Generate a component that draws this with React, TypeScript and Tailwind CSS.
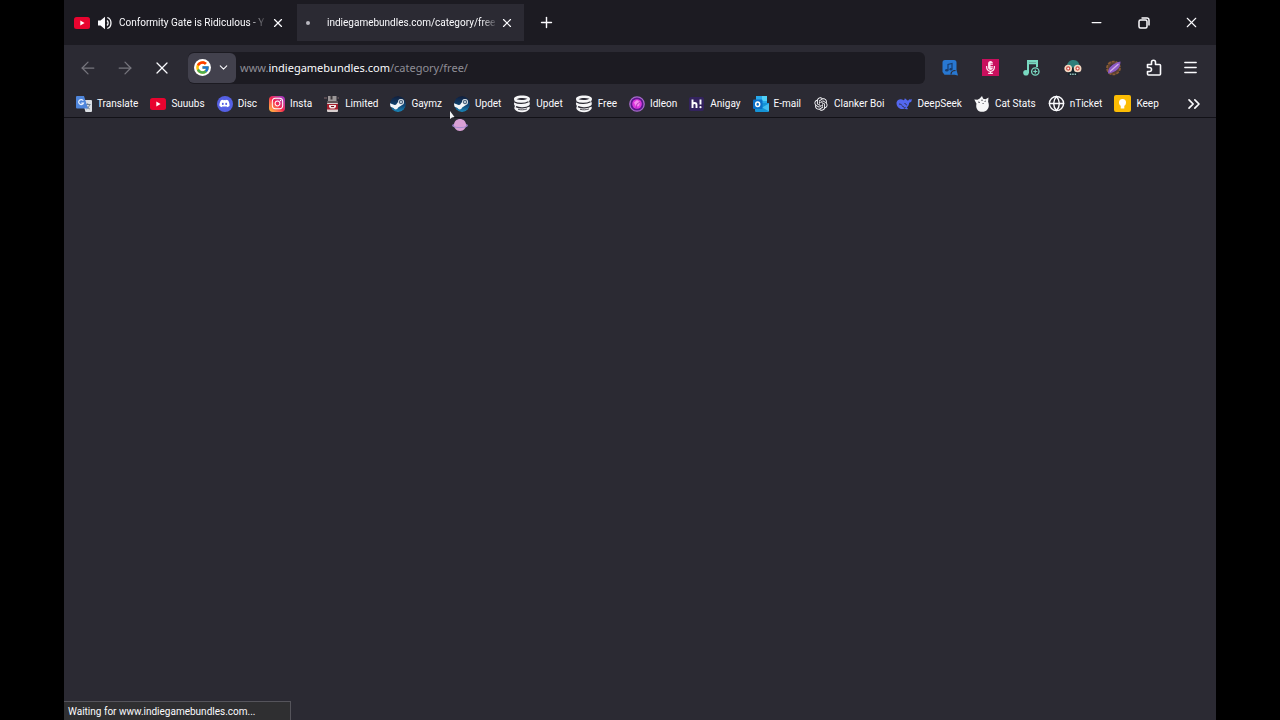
import type { ReactNode } from "react";
import { ArrowLeft, ArrowRight, ChevronDown, ChevronsRight, Globe, Menu, Minus, Plus, X } from "lucide-react";
import { FaDiscord, FaInstagram, FaMicrophoneAlt } from "react-icons/fa";
import { FcGoogle } from "react-icons/fc";
import { RiOpenaiFill } from "react-icons/ri";

function YoutubeIcon() {
  return (
    <svg viewBox="0 0 16 16" className="size-4 shrink-0">
      <rect x="0" y="2" width="16" height="12" rx="2.5" fill="#e8042f" />
      <path d="M6.3 5.6v4.8L10.6 8z" fill="#fff" />
    </svg>
  );
}

function TranslateIcon() {
  return (
    <svg viewBox="0 0 16 16" className="size-4 shrink-0">
      <path d="M6 4h9a1 1 0 0 1 1 1v10a1 1 0 0 1-1 1H9.500z" fill="#dcdfe4" />
      <path d="M9 8.500h5.500M11.700 7.300v1.200M13.700 8.500c-.5 2-1.700 3.500-3.200 4.500M10.500 10c.7 1.300 1.900 2.400 3.300 3" stroke="#6b7f94" fill="none" />
      <path d="M1 0h7l4 12.500H1a1 1 0 0 1-1-1V1a1 1 0 0 1 1-1z" fill="#4f86dc" />
      <path d="M7.300 4.700A2.500 2.500 0 1 0 7.500 7H5.200" stroke="#e6efff" strokeWidth="1.200" fill="none" />
    </svg>
  );
}

function DiscordIcon() {
  return (
    <span className="flex size-4 shrink-0 items-center justify-center rounded-full bg-[#5560e4] text-white">
      <FaDiscord size={11} />
    </span>
  );
}

function InstagramIcon() {
  return (
    <span className="flex size-4 shrink-0 items-center justify-center rounded bg-linear-to-tr from-[#ffc33a] via-[#f5204f] to-[#9a2bd0] text-white">
      <FaInstagram size={13} />
    </span>
  );
}

function JarIcon() {
  return (
    <svg viewBox="0 0 16 16" className="size-4 shrink-0">
      <path d="M0 1h3v2H0zM13.500 1H15v2h-1.500z" fill="#55484f" />
      <path d="M4 0h8.500v5H4z" fill="#9c9798" />
      <path d="M6.500 0h2v3.500h-2z" fill="#3b363a" />
      <path d="M3 5h11v3H3z" fill="#5f5557" />
      <rect x="3" y="7" width="11" height="9" rx="1" fill="#d9cfcf" />
      <path d="M3 8h11v5.500H3z" fill="#a51f2d" />
      <path d="M5 9h7v2L10.500 12.500h-4L5 11z" fill="#f4e7e7" />
      <path d="M7 10.500h3" stroke="#771521" />
    </svg>
  );
}

function SteamIcon() {
  return (
    <svg viewBox="0 0 16 16" className="size-4 shrink-0">
      <defs>
        <linearGradient id="steam" x1="0" y1="0" x2="0" y2="1">
          <stop offset="0" stopColor="#111d3a" />
          <stop offset="0.6" stopColor="#0f4775" />
          <stop offset="1" stopColor="#1b8abd" />
        </linearGradient>
        <clipPath id="steam-disc">
          <circle cx="8" cy="8" r="8" />
        </clipPath>
      </defs>
      <g clipPath="url(#steam-disc)">
        <circle cx="8" cy="8" r="8" fill="url(#steam)" />
        <path d="M-1 6.800 4.600 9l1.400-.3 2.400-3.300 4 3.300-4.200 2.900a2.500 2.500 0 0 1-4.700.4L-1 10z" fill="#f3f6f8" />
        <circle cx="11" cy="6" r="3" fill="#f3f6f8" />
        <circle cx="11" cy="6" r="1.800" fill="#b4c5d1" stroke="#1f3c5c" strokeWidth=".8" />
      </g>
    </svg>
  );
}

function StackIcon() {
  return (
    <svg viewBox="0 0 18 18" className="size-[18px] shrink-0">
      <path d="M1 4c0-2 3-3.500 8-3.500S17 2 17 4c0 1-.4 1.700-1 2.200 1 1 1.200 3.200 0 4.600 1 1.200 1 2.500.2 3.500-1.500 1.800-4 2.900-7.200 2.900S3 16.300 1.700 14.300c-.5-1-.5-2.200.3-3.300C.7 9.800.7 7.500 1.900 6.200 1.300 5.600 1 4.900 1 4z" fill="#f6f6f8" />
      <path d="M3.500 4.300C6 2.600 11 2.500 14.500 3.700 12 5.200 7 5.400 3.500 4.300z" fill="#2b2a33" />
      <path d="M1.500 7c3.500 2 10 2 14-.3M3 11.700c3.500 1.700 9.500 1.600 14-1" fill="none" stroke="#2b2a33" strokeWidth="1.300" />
      <path d="M5 14.300c3 .8 6 .7 9-.4" fill="none" stroke="#2b2a33" strokeWidth=".8" />
    </svg>
  );
}

function GemIcon() {
  return (
    <svg viewBox="0 0 16 16" className="size-4 shrink-0">
      <circle cx="8" cy="8" r="7.200" fill="#5b168b" stroke="#a66bc9" strokeWidth="1.300" />
      <circle cx="8" cy="8" r="4.800" fill="#dd38df" />
      <path d="M5 6.500 8 4l3 2-1 4-3 .8z" fill="#f489ed" />
      <path d="M8 8l3-2M8 8l-1 4" stroke="#a91fb5" strokeWidth=".8" />
    </svg>
  );
}

function HIcon() {
  return (
    <svg viewBox="0 0 16 16" className="size-4 shrink-0">
      <rect y="1" width="15" height="14" rx="2" fill="#33235e" />
      <path d="M3.500 3.500v8.500M3.500 8.500c.5-2 4-2.200 4 .3V12M11.500 3.500v5" fill="none" stroke="#fff" strokeWidth="1.900" />
      <circle cx="11.500" cy="11.200" r="1.100" fill="#fff" />
    </svg>
  );
}

function OutlookIcon() {
  return (
    <svg viewBox="0 0 16 16" className="size-4 shrink-0">
      <path d="M3 0h11v8H3z" fill="#28a8ea" />
      <path d="M9 0h5v5H9z" fill="#50d0f8" />
      <path d="M2 7h14v8a1 1 0 0 1-1 1H3a1 1 0 0 1-1-1z" fill="#1593d6" />
      <path d="M16 7.500v7.800L9 11.500z" fill="#42bdef" />
      <rect y="3.500" width="9.500" height="9.500" rx="1" fill="#0b6fc6" />
      <ellipse cx="4.700" cy="8.200" rx="2" ry="2.300" fill="none" stroke="#fff" strokeWidth="1.500" />
    </svg>
  );
}

function WhaleIcon() {
  return (
    <svg viewBox="0 0 16 16" className="size-4 shrink-0">
      <path
        d="M.5 6.500C1.500 3 5 2.500 7.500 4.200c1-.3 1.300-1 1.200-2 1.300.4 1.800 1.600 2.800 2.400 1 .2 1.300-1 2-1.300.7.500 1.500.3 2.200-.2.3 2.300-.7 3.500-2.500 3.700-.2 2-1 3.700-2.400 4.800l1.300 1.300c-1.600.7-2.700.2-3.600-.4C4.500 14.200.3 11.500.5 6.500z"
        fill="#5367ee"
      />
      <path d="M3 8c1.800-.2 3.200 1.400 4.400 3 1 .9 1.800.8 2.200.4M8.500 7.500c1.200 0 1.800.8 2 1.800" fill="none" stroke="#2b2a33" strokeWidth=".9" />
    </svg>
  );
}

function CatIcon() {
  return (
    <svg viewBox="0 0 16 16" className="size-4 shrink-0">
      <path d="M.3 3.500l3.200.2L5.700 2.500 8 0l1.200 2.800 2.300.4 3-1.700-.4 4.300c2 4.500-.1 10-5.900 10-4.500 0-6.800-3.600-5.700-8z" fill="#f7f7f8" />
      <path d="M4 6l2 .5M8.500 7.500h1.200M10.500 5.500l1.500-.5" stroke="#3a3942" strokeWidth=".8" />
      <circle cx="8" cy="4.200" r=".7" fill="#3a3942" />
    </svg>
  );
}

function KeepIcon() {
  return (
    <svg viewBox="0 0 17 17" className="size-[17px] shrink-0">
      <rect width="17" height="17" rx="2" fill="#fbbc04" />
      <circle cx="8.500" cy="7.500" r="3.500" fill="#fff" />
      <path d="M6.700 10h3.600v3.500H6.700z" fill="#fff" />
    </svg>
  );
}

function SpeakerIcon() {
  return (
    <svg viewBox="0 0 14 14" className="size-3.5">
      <path d="M0 4.500h2.500L7 .8v12.400L2.500 9.500H0z" fill="#fbfbfe" />
      <path d="M9 4.500c1.500 1.300 1.500 3.700 0 5M9.300 1.500c4.900 1.500 4.900 9.500 0 11" fill="none" stroke="#fbfbfe" strokeWidth="1.300" />
    </svg>
  );
}

function MusicSearchIcon() {
  return (
    <svg viewBox="0 0 16 16" className="size-4">
      <path d="M3 0h9a2.500 2.500 0 0 1 2.500 2.500V10l1.500 5.500-3.500-.8H2.500L.5 12V2.500A2.500 2.500 0 0 1 3 0z" fill="#2878d2" />
      <path d="M6 10V4.500L10 3.500V9" fill="none" stroke="#173d70" strokeWidth="1.200" />
      <ellipse cx="4.800" cy="10.300" rx="1.700" ry="1.300" fill="#173d70" />
      <ellipse cx="8.900" cy="9.300" rx="1.500" ry="1.200" fill="#173d70" />
      <path d="M9 14.500c0-3 1.500-4 4.500-4" fill="none" stroke="#2b2a33" strokeWidth="1.200" />
    </svg>
  );
}

function MicIcon() {
  return (
    <span className="flex size-[17px] items-center justify-center bg-[#c90f5d] text-[#ffe9f2]">
      <FaMicrophoneAlt size={13} />
    </span>
  );
}

function MusicAddIcon() {
  return (
    <svg viewBox="0 0 17 16" className="h-4 w-[17px]">
      <path d="M5 13V1h9v6M5 3.200h9" fill="none" stroke="#79d9c1" strokeWidth="2" />
      <circle cx="3" cy="12.700" r="2.800" fill="#79d9c1" />
      <circle cx="12.300" cy="11.500" r="3.700" fill="#2b2a33" stroke="#79d9c1" strokeWidth="1.300" />
      <path d="M12.300 9.500v4M10.300 11.500h4" stroke="#79d9c1" strokeWidth="1.200" />
    </svg>
  );
}

function SkullIcon() {
  return (
    <svg viewBox="0 0 18 16" className="h-4 w-[18px]">
      <path d="M2.500 7.500C3 2.500 5.500 0 9.500 0S15.500 3 16 7.500z" fill="#2f7f7b" />
      <path d="M4 8.500h10v6a1 1 0 0 1-1 1H5a1 1 0 0 1-1-1z" fill="#14232a" />
      <circle cx="4.200" cy="8.500" r="3" fill="#c94b43" stroke="#f5d9c3" strokeWidth="1.700" />
      <circle cx="13.600" cy="8.500" r="3" fill="#c94b43" stroke="#f5d9c3" strokeWidth="1.700" />
      <circle cx="4.200" cy="8.500" r="1" fill="#fff" />
      <circle cx="13.600" cy="8.500" r="1" fill="#fff" />
      <path d="M5.800 14.200h1.500M8.200 14.200h1.500M10.600 14.200h1.500" stroke="#9cc7c0" strokeWidth="1.500" />
    </svg>
  );
}

function PlanetIcon() {
  return (
    <svg viewBox="0 0 16 16" className="size-4">
      <circle cx="7.500" cy="8" r="6.500" fill="#5a4030" stroke="#8b5c34" strokeWidth="1.700" strokeDasharray="3 1" />
      <circle cx="7.500" cy="8" r="3.800" fill="#2b2530" />
      <path d="M2 13.500C1.500 8 6 3.500 14.500 1.500 14.500 8 10.500 12.500 2 13.500z" fill="#8d5bc4" />
      <path d="M4 11.500 12.500 4" stroke="#d4afe9" strokeWidth="1.200" />
    </svg>
  );
}

function ExtensionsIcon() {
  return (
    <svg viewBox="0 0 16 17" className="h-[17px] w-4">
      <path
        d="M1.500 5.500h4V3.200a2 2 0 0 1 4 0v2.300h4a1 1 0 0 1 1 1V15a1 1 0 0 1-1 1h-11a1 1 0 0 1-1-1v-2.500h2a2 2 0 0 0 0-4h-2z"
        fill="none"
        stroke="#fbfbfe"
        strokeWidth="1.600"
        strokeLinejoin="round"
      />
    </svg>
  );
}

function RestoreIcon() {
  return (
    <svg viewBox="0 0 12 12" className="size-3">
      <rect x="1" y="3" width="8" height="8" rx="1.500" fill="none" stroke="#fbfbfe" strokeWidth="1.500" />
      <path d="M3.500 1h5.700A2 2 0 0 1 11 3v5.500" fill="none" stroke="#fbfbfe" strokeWidth="1.500" />
    </svg>
  );
}

function Pointer() {
  return (
    <svg viewBox="0 0 20 22" className="pointer-events-none absolute top-[111px] left-[385px] h-[22px] w-5">
      <path d="M1 0v8l2-1.500L5.500 6z" fill="#f4f4f6" />
      <ellipse cx="11" cy="14.500" rx="8" ry="2.500" fill="#8f78bd" />
      <path d="M5 14C5 6 17 6 17 14c0 2.500-2 6-6 6s-6-3.500-6-6z" fill="#d9a0d6" />
      <path d="M4.500 15.500c3 1.500 10 1.500 13 0" fill="none" stroke="#a58ad0" />
    </svg>
  );
}

const bookmarks: { label: string; icon: ReactNode }[] = [
  { label: "Translate", icon: <TranslateIcon /> },
  { label: "Suuubs", icon: <YoutubeIcon /> },
  { label: "Disc", icon: <DiscordIcon /> },
  { label: "Insta", icon: <InstagramIcon /> },
  { label: "Limited", icon: <JarIcon /> },
  { label: "Gaymz", icon: <SteamIcon /> },
  { label: "Updet", icon: <SteamIcon /> },
  { label: "Updet", icon: <StackIcon /> },
  { label: "Free", icon: <StackIcon /> },
  { label: "Idleon", icon: <GemIcon /> },
  { label: "Anigay", icon: <HIcon /> },
  { label: "E-mail", icon: <OutlookIcon /> },
  { label: "Clanker Boi", icon: <RiOpenaiFill size={16} className="shrink-0" /> },
  { label: "DeepSeek", icon: <WhaleIcon /> },
  { label: "Cat Stats", icon: <CatIcon /> },
  { label: "nTicket", icon: <Globe size={17} strokeWidth={2} className="shrink-0" /> },
  { label: "Keep", icon: <KeepIcon /> },
];

const extensions: { label: string; icon: ReactNode }[] = [
  { label: "Music search", icon: <MusicSearchIcon /> },
  { label: "Voice recorder", icon: <MicIcon /> },
  { label: "Add music", icon: <MusicAddIcon /> },
  { label: "Skull", icon: <SkullIcon /> },
  { label: "Planet", icon: <PlanetIcon /> },
];

function TabBar() {
  return (
    <div className="flex h-[45px] items-center bg-[#1c1b22] pr-3">
      <div className="flex h-[37px] w-[233px] items-center pr-3 pl-2.5">
        <YoutubeIcon />
        <button aria-label="Mute tab" className="ml-2 shrink-0">
          <SpeakerIcon />
        </button>
        <span className="ml-[7px] flex-1 mask-r-from-88% whitespace-nowrap">Conformity Gate is Ridiculous - Y</span>
        <button aria-label="Close tab" className="ml-1 shrink-0">
          <X size={14} />
        </button>
      </div>
      <div className="flex h-[37px] w-[227px] items-center bg-[#2b2a33] pr-2.5 pl-[9px]">
        <span className="size-1 shrink-0 rounded-full bg-[#b9b8c0]" />
        <span className="ml-[17px] flex-1 mask-r-from-90% whitespace-nowrap">indiegamebundles.com/category/free</span>
        <button aria-label="Close tab" className="ml-0.5 shrink-0">
          <X size={14} />
        </button>
      </div>
      <button aria-label="New tab" className="ml-3.5">
        <Plus size={17} />
      </button>
      <div className="ml-auto flex items-center">
        <button aria-label="Minimize" className="flex w-12 justify-center">
          <Minus size={15} />
        </button>
        <button aria-label="Restore" className="flex w-12 justify-center">
          <RestoreIcon />
        </button>
        <button aria-label="Close" className="flex w-9 justify-end pr-1">
          <X size={17} strokeWidth={1.5} />
        </button>
      </div>
    </div>
  );
}

function NavBar() {
  return (
    <div className="flex h-[45px] items-center pr-[17px] pl-3.5">
      <button aria-label="Back" className="mr-[17px] text-[#77767e]">
        <ArrowLeft size={20} strokeWidth={1.5} />
      </button>
      <button aria-label="Forward" className="mr-[17px] text-[#77767e]">
        <ArrowRight size={20} strokeWidth={1.5} />
      </button>
      <button aria-label="Stop">
        <X size={20} strokeWidth={1.5} />
      </button>
      <div className="ml-4 flex h-8 flex-1 items-center rounded-md bg-[#1c1b22]">
        <button aria-label="Search engine" className="flex h-[30px] w-12 items-center gap-1.5 rounded-md bg-[#42414d] pl-1.5">
          <span className="flex size-[17px] items-center justify-center rounded-full bg-white">
            <FcGoogle size={15} />
          </span>
          <ChevronDown size={13} />
        </button>
        <div className="ml-1 flex-1 pt-0.5 font-['Noto_Sans',sans-serif] text-[11px] text-[#8f8e96]" role="textbox" aria-label="Address">
          www.<span className="text-[#fbfbfe]">indiegamebundles.com</span>/category/free/
        </div>
      </div>
      <div className="ml-[17px] flex items-center gap-6">
        {extensions.map((ext) => (
          <button key={ext.label} aria-label={ext.label}>
            {ext.icon}
          </button>
        ))}
        <button aria-label="Extensions">
          <ExtensionsIcon />
        </button>
        <button aria-label="Menu" className="-ml-1">
          <Menu size={17} />
        </button>
      </div>
    </div>
  );
}

function BookmarksBar() {
  return (
    <div className="flex h-7 items-center border-b border-[#121117] pr-3 pl-3">
      <nav className="flex flex-1 items-center gap-3">
        {bookmarks.map((b, i) => (
          <a key={i} href="#" className="flex items-center gap-[5px] whitespace-nowrap">
            {b.icon}
            {b.label}
          </a>
        ))}
      </nav>
      <button aria-label="More bookmarks">
        <ChevronsRight size={20} />
      </button>
    </div>
  );
}

export default function App() {
  return (
    <div className="min-h-screen bg-black">
      <div className="relative mx-auto flex min-h-screen w-9/10 flex-col bg-[#2b2a33] font-[Roboto,'Open_Sans',sans-serif] text-[10px] text-[#fbfbfe]">
        <TabBar />
        <NavBar />
        <BookmarksBar />
        <main className="flex flex-1 items-end">
          <div className="flex h-[19px] w-[227px] items-center border-t border-r border-[#55545b] bg-[#2f2f31] pl-1">
            Waiting for www.indiegamebundles.com...
          </div>
        </main>
        <Pointer />
      </div>
    </div>
  );
}
